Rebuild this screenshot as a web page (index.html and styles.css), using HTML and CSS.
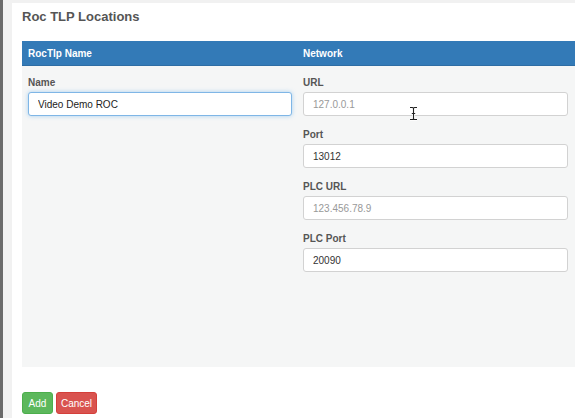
FILE: index.html
```html
<!DOCTYPE html>
<html>
<head>
<meta charset="utf-8">
<link rel="stylesheet" href="styles.css">
</head>
<body>
<div class="frame">
  <div class="edge"></div>
  <div class="main">
    <h1 class="title">Roc TLP Locations</h1>
    <div class="panel">
      <div class="panel-head">
        <div class="head-cell">RocTlp Name</div>
        <div class="head-cell">Network</div>
      </div>
      <div class="panel-body">
        <div class="col">
          <div class="field">
            <label class="label">Name</label>
            <input class="input focused" type="text" value="Video Demo ROC">
          </div>
        </div>
        <div class="col">
          <div class="field">
            <label class="label">URL</label>
            <input class="input" type="text" placeholder="127.0.0.1">
          </div>
          <div class="field">
            <label class="label">Port</label>
            <input class="input" type="text" value="13012">
          </div>
          <div class="field">
            <label class="label">PLC URL</label>
            <input class="input" type="text" placeholder="123.456.78.9">
          </div>
          <div class="field">
            <label class="label">PLC Port</label>
            <input class="input" type="text" value="20090">
          </div>
        </div>
      </div>
    </div>
    <div class="actions">
      <button class="btn btn-add">Add</button>
      <button class="btn btn-cancel">Cancel</button>
    </div>
    <svg class="ibeam" width="9" height="15" viewBox="0 0 9 15">
      <path d="M1 1.5h2.5c0.6 0 1 0.4 1 1v10c0 0.6 0.4 1 1 1H8M8 1.5H5.5c-0.6 0-1 0.4-1 1M4.5 12.5c0 0.6-0.4 1-1 1H1M2.8 7.5h3.4" fill="none" stroke="#fff" stroke-width="2.6"/>
      <path d="M1 1.5h2.5c0.6 0 1 0.4 1 1v10c0 0.6 0.4 1 1 1H8M8 1.5H5.5c-0.6 0-1 0.4-1 1M4.5 12.5c0 0.6-0.4 1-1 1H1M2.8 7.5h3.4" fill="none" stroke="#222" stroke-width="1.1"/>
    </svg>
  </div>
</div>
</body>
</html>
```

FILE: styles.css
```css
html, body {
  margin: 0;
  padding: 0;
  height: 100%;
}
body {
  background: #f1f1f1;
  font-family: "Liberation Sans", Arial, sans-serif;
  overflow: hidden;
}
.frame {
  display: flex;
  height: 418px;
}
.edge {
  width: 3px;
  background: #6a6a6a;
  flex: none;
}
.main {
  position: relative;
  flex: 1;
  margin-left: 9px;
  margin-top: 3px;
  background: #fff;
  padding: 4px 0 0 10px;
}
.title {
  margin: 0 0 14px 0;
  font-size: 13px;
  line-height: 20px;
  font-weight: bold;
  color: #555;
}
.panel {
  width: 553px;
}
.panel-head {
  display: grid;
  grid-template-columns: 275px 1fr;
  height: 24px;
  background: #337ab7;
  border-bottom: 1px solid #2e6da4;
}
.head-cell {
  padding-left: 6px;
  color: #fff;
  font-size: 10px;
  font-weight: bold;
  line-height: 25px;
}
.panel-body {
  display: grid;
  grid-template-columns: 275px 1fr;
  background: #f5f6f6;
  min-height: 301px;
  box-sizing: border-box;
  padding-top: 8px;
}
.col {
  display: flex;
  flex-direction: column;
  gap: 10px;
  padding: 0 6px;
}
.col:first-child {
  padding-right: 5px;
}
.col:last-child {
  padding-right: 7px;
}
.field {
  display: flex;
  flex-direction: column;
  gap: 3px;
}
.label {
  font-size: 10px;
  line-height: 15px;
  padding-top: 1px;
  margin-bottom: -1px;
  font-weight: bold;
  color: #555;
}
.input {
  height: 24px;
  box-sizing: border-box;
  border: 1px solid #d2d2d2;
  border-radius: 3px;
  background: #fff;
  padding: 0 9px;
  font-family: "Liberation Sans", Arial, sans-serif;
  font-size: 10px;
  color: #333;
  outline: none;
  margin: 0;
  width: 100%;
}
.input::placeholder {
  color: #999;
}
.input.focused {
  border-color: #7fb6e6;
  box-shadow: 0 0 4px rgba(102, 175, 233, 0.55);
  color: #222;
}
.actions {
  display: flex;
  gap: 3px;
  margin-top: 25px;
}
.btn {
  height: 22px;
  border-radius: 3px;
  border: 1px solid transparent;
  color: #fff;
  font-family: "Liberation Sans", Arial, sans-serif;
  font-size: 10px;
  padding: 0;
  margin: 0;
}
.btn-add {
  width: 31px;
  background: #5cb85c;
  border-color: #4cae4c;
}
.btn-cancel {
  width: 41px;
  background: #d9534f;
  border-color: #d43f3a;
}
.ibeam {
  position: absolute;
  left: 397px;
  top: 103px;
}
```
